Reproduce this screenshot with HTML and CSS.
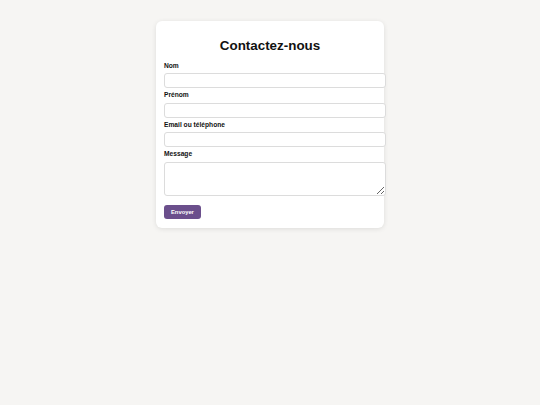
FILE: index.html
```html
<!DOCTYPE html>
<html lang="fr">
<head>
    <meta charset="UTF-8">
    <meta name="viewport" content="width=device-width, initial-scale=1.0">
    <title>Contactez-nous</title>
    <link rel="stylesheet" href="styles.css">
</head>
<body>
    <div class="contact-card">
        <h1>Contactez-nous</h1>
        <form class="contact-form">
            <label for="nom">Nom</label>
            <input type="text" id="nom">

            <label for="prenom">Prénom</label>
            <input type="text" id="prenom">

            <label for="contact">Email ou téléphone</label>
            <input type="text" id="contact">

            <label for="message">Message</label>
            <textarea id="message"></textarea>

            <button type="submit" class="send-button">Envoyer</button>
        </form>
    </div>
</body>
</html>
```

FILE: styles.css
```css
:root {
    --primary-color: #6b4f8c;
    --background-color: #f6f5f3;
    --border-color: #dcdcdc;
    --text-color: #111;
}

body {
    font-family: 'Liberation Sans', Arial, sans-serif;
    margin: 0;
    padding: 21px 0;
    background-color: var(--background-color);
    color: var(--text-color);
    font-size: 6.67px;
}

.contact-card {
    width: 212px;
    margin: 0 auto;
    padding: 17px 8px 9px;
    background: white;
    border-radius: 6px;
    box-shadow: 0 1px 5px rgba(0,0,0,0.1);
}

h1 {
    font-size: 13.4px;
    line-height: 15.5px;
    margin: 0 0 8px;
    text-align: center;
}

.contact-form label {
    display: block;
    font-weight: bold;
    line-height: 8px;
    margin-bottom: 3.5px;
}

.contact-form input,
.contact-form textarea {
    display: block;
    width: 100%;
    height: 13px;
    padding: 0 4px;
    margin: 0 0 3px;
    border: 1px solid var(--border-color);
    border-radius: 3px;
    font-family: inherit;
    font-size: 6.67px;
}

.contact-form textarea {
    height: 32px;
    margin-bottom: 9px;
}

.send-button {
    display: block;
    padding: 0 7px;
    height: 14px;
    background-color: var(--primary-color);
    color: white;
    border: none;
    border-radius: 3px;
    font-family: inherit;
    font-size: 5.8px;
    font-weight: bold;
    cursor: pointer;
}
```
